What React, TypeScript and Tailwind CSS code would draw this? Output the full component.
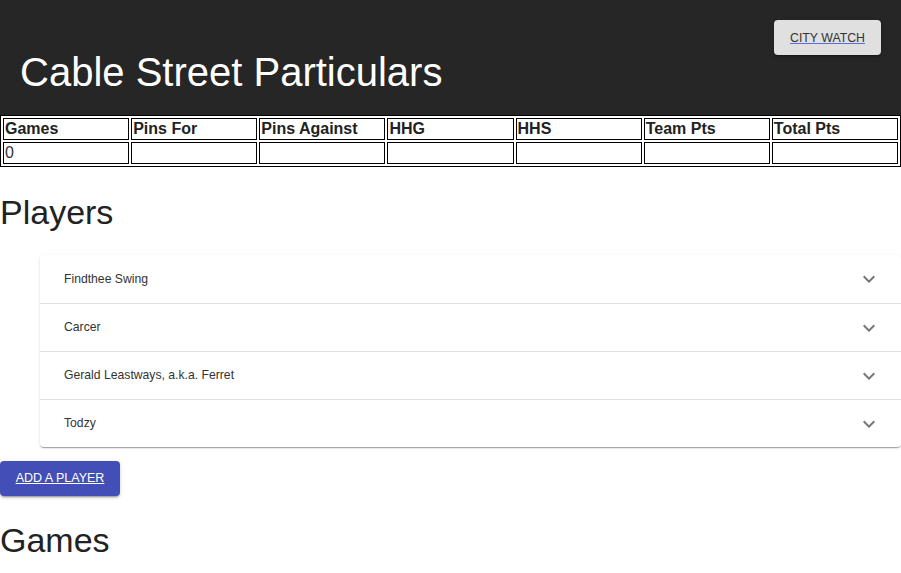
import React from "react";

const columns = ["Games", "Pins For", "Pins Against", "HHG", "HHS", "Team Pts", "Total Pts"];
const row = ["0", "", "", "", "", "", ""];
const players = ["Findthee Swing", "Carcer", "Gerald Leastways, a.k.a. Ferret", "Todzy"];

function ExpandMore() {
  return (
    <svg width="24" height="24" viewBox="0 0 24 24" fill="rgba(0,0,0,0.54)">
      <path d="M16.59 8.59 12 13.17 7.41 8.59 6 10l6 6 6-6z" />
    </svg>
  );
}

export default function App() {
  return (
    <div className="min-h-[573px] bg-white text-[#222] font-['Liberation_Sans',Arial,sans-serif]">
      <header className="h-[115px] bg-[#262626] flex justify-between items-start px-5">
        <h1 className="mt-[52px] text-[40px] leading-[40px] text-white font-normal">Cable Street Particulars</h1>
        <button className="mt-5 h-[35px] w-[107px] pt-px rounded bg-[#e0e0e0] text-[12.3px] text-[#333] underline decoration-[#5b6ee1] shadow-[0_3px_1px_-2px_rgba(0,0,0,0.2),0_2px_2px_0_rgba(0,0,0,0.14),0_1px_5px_0_rgba(0,0,0,0.12)]">
          CITY WATCH
        </button>
      </header>

      <table className="w-full table-fixed border border-black border-separate border-spacing-[2px]">
        <thead>
          <tr>
            {columns.map((c) => (
              <th key={c} className="border border-black p-px text-left text-[16px] leading-[18px] font-bold text-[#222]">
                {c}
              </th>
            ))}
          </tr>
        </thead>
        <tbody>
          <tr>
            {row.map((v, i) => (
              <td key={i} className="border border-black p-px h-[22px] text-[16px] leading-[18px] text-[#333]">
                {v}
              </td>
            ))}
          </tr>
        </tbody>
      </table>

      <h2 className="mt-[25px] text-[34px] leading-[40px] font-normal">Players</h2>

      <div className="ml-10 mt-[23px] bg-white rounded shadow-[0_2px_1px_-1px_rgba(0,0,0,0.2),0_1px_1px_0_rgba(0,0,0,0.14),0_1px_3px_0_rgba(0,0,0,0.12)]">
        {players.map((p, i) => (
          <div
            key={p}
            className={`h-12 flex items-center justify-between pl-6 pr-5 ${i > 0 ? "border-t border-[#e0e0e0]" : ""}`}
          >
            <span className="text-[12.2px] text-[#333]">{p}</span>
            <ExpandMore />
          </div>
        ))}
      </div>

      <button className="mt-[14px] h-[35px] w-[120px] rounded bg-[#434fb6] text-white text-[12.5px] underline shadow-[0_3px_1px_-2px_rgba(0,0,0,0.2),0_2px_2px_0_rgba(0,0,0,0.14),0_1px_5px_0_rgba(0,0,0,0.12)]">
        ADD A PLAYER
      </button>

      <h2 className="mt-6 text-[34px] leading-[40px] font-normal">Games</h2>
    </div>
  );
}
